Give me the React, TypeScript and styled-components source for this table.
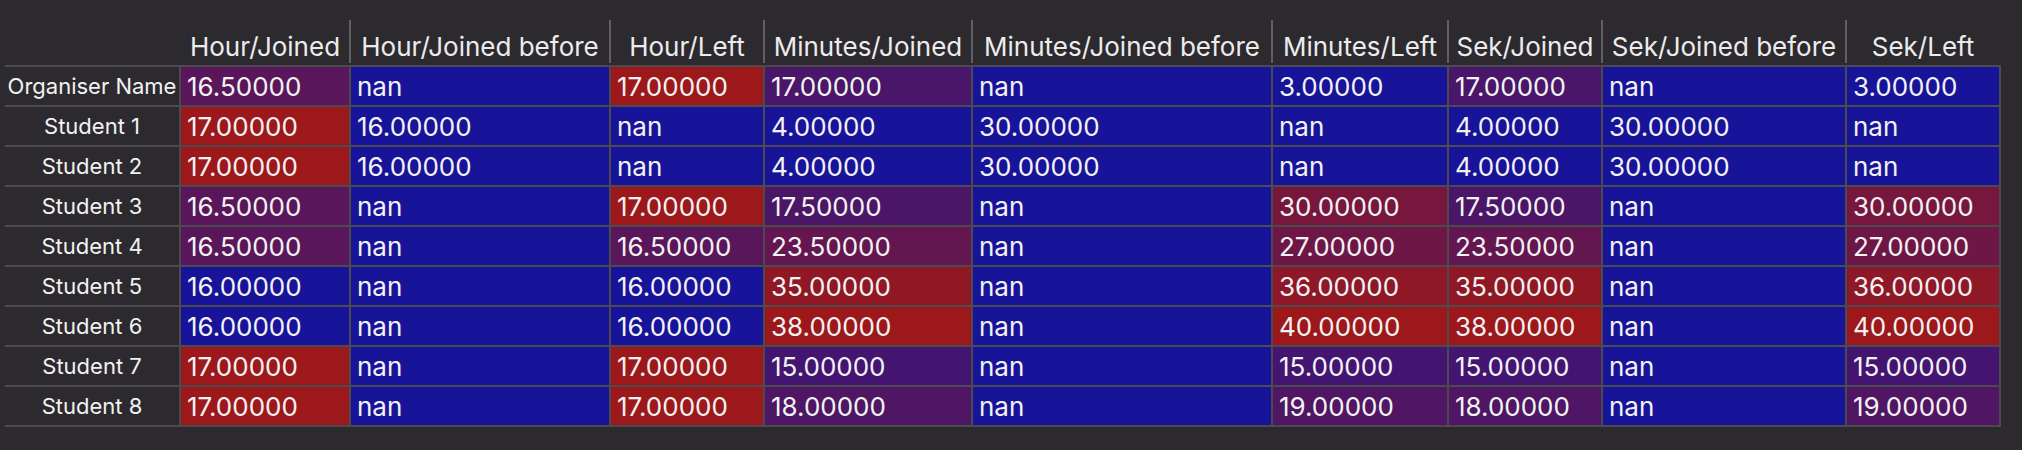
import { Fragment } from "react";
import styled, { createGlobalStyle } from "styled-components";

const GlobalStyle = createGlobalStyle`
  html, body {
    margin: 0;
    padding: 0;
    background: #2c2a2e;
  }
  body {
    font-family: Inter, "Noto Sans", sans-serif;
    color: #f2f2f2;
  }
`;

const TEMPLATE = "174px 168px 258px 152px 206px 298px 174px 152px 242px 152px";

const columns = [
  "Hour/Joined",
  "Hour/Joined before",
  "Hour/Left",
  "Minutes/Joined",
  "Minutes/Joined before",
  "Minutes/Left",
  "Sek/Joined",
  "Sek/Joined before",
  "Sek/Left",
];

type Value = number | null;

const rows: { name: string; values: Value[] }[] = [
  { name: "Organiser Name", values: [16.5, null, 17, 17, null, 3, 17, null, 3] },
  { name: "Student 1", values: [17, 16, null, 4, 30, null, 4, 30, null] },
  { name: "Student 2", values: [17, 16, null, 4, 30, null, 4, 30, null] },
  { name: "Student 3", values: [16.5, null, 17, 17.5, null, 30, 17.5, null, 30] },
  { name: "Student 4", values: [16.5, null, 16.5, 23.5, null, 27, 23.5, null, 27] },
  { name: "Student 5", values: [16, null, 16, 35, null, 36, 35, null, 36] },
  { name: "Student 6", values: [16, null, 16, 38, null, 40, 38, null, 40] },
  { name: "Student 7", values: [17, null, 17, 15, null, 15, 15, null, 15] },
  { name: "Student 8", values: [17, null, 17, 18, null, 19, 18, null, 19] },
];

// blue (low) -> red (high), per column
const BLUE = [24, 20, 154];
const RED = [156, 24, 26];

const mix = (t: number) => {
  const c = BLUE.map((b, i) => Math.round(b + (RED[i] - b) * t));
  return `rgb(${c[0]}, ${c[1]}, ${c[2]})`;
};

const ranges = columns.map((_, ci) => {
  const nums = rows.map((r) => r.values[ci]).filter((v): v is number => v !== null);
  return { min: Math.min(...nums), max: Math.max(...nums) };
});

const toneOf = (v: Value, ci: number) => {
  if (v === null) return 0;
  const { min, max } = ranges[ci];
  if (max === min) return 0;
  return (v - min) / (max - min);
};

const Page = styled.div`
  padding: 20px 0 0 5px;
  width: 2022px;
  height: 450px;
  box-sizing: border-box;
`;

const HeaderRow = styled.div`
  display: grid;
  grid-template-columns: ${TEMPLATE};
  column-gap: 2px;
  padding-right: 2px;
  height: 43px;
  margin-bottom: 2px;
`;

const HeaderCell = styled.div<{ $sep?: boolean }>`
  display: flex;
  align-items: center;
  justify-content: center;
  padding-top: 9px;
  box-sizing: border-box;
  font-size: 26px;
  white-space: nowrap;
  color: #ececec;
  box-shadow: ${(p) => (p.$sep ? "-2px 0 0 0 #5f5e63" : "none")};
`;

const Grid = styled.div`
  display: inline-grid;
  grid-template-columns: ${TEMPLATE};
  grid-auto-rows: 38px;
  gap: 2px;
  padding: 2px 2px 2px 0;
  background: #4b4a4f;
`;

const IndexCell = styled.div`
  display: flex;
  align-items: center;
  justify-content: center;
  background: #2c2a2e;
  font-size: 22px;
  white-space: nowrap;
`;

const ValueCell = styled.div<{ $tone: number }>`
  display: flex;
  align-items: center;
  padding-left: 6px;
  background: ${(p) => mix(p.$tone)};
  font-size: 26px;
  white-space: nowrap;
  overflow: hidden;
`;

export default function App() {
  return (
    <Page>
      <GlobalStyle />
      <HeaderRow>
        <HeaderCell />
        {columns.map((c, i) => (
          <HeaderCell key={c} $sep={i > 0}>
            {c}
          </HeaderCell>
        ))}
      </HeaderRow>
      <Grid>
        {rows.map((r) => (
          <Fragment key={r.name}>
            <IndexCell>{r.name}</IndexCell>
            {r.values.map((v, ci) => (
              <ValueCell key={ci} $tone={toneOf(v, ci)}>
                {v === null ? "nan" : v.toFixed(5)}
              </ValueCell>
            ))}
          </Fragment>
        ))}
      </Grid>
    </Page>
  );
}
